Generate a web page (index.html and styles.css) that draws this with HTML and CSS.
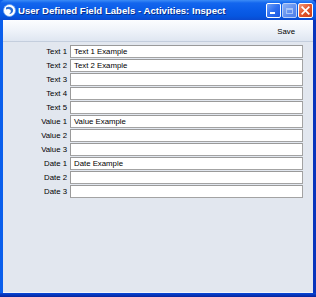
FILE: index.html
```html
<!DOCTYPE html>
<html>
<head>
<meta charset="utf-8">
<link rel="stylesheet" href="styles.css">
</head>
<body>
<div class="window">
  <div class="titlebar">
    <svg class="appicon" width="13" height="13" viewBox="0 0 13 13">
      <circle cx="6.5" cy="6.5" r="6" fill="#ffffff" stroke="#6fa4f0" stroke-width="0.8"/>
      <path d="M3 3.5 C5 2.2 9 2.5 10 5.5 C10.6 8 8.6 10.2 6 10.2 C8 9 8.5 6.8 7 5.6 C5.8 4.7 4.2 4.8 3 5.6 Z" fill="#2a6fd6"/>
    </svg>
    <div class="title">User Defined Field Labels - Activities: Inspect</div>
    <div class="buttons">
      <div class="btn min"><span class="minbar"></span></div>
      <div class="btn max disabled"><span class="maxbox"></span></div>
      <div class="btn close">
        <svg width="9" height="9" viewBox="0 0 9 9"><path d="M1.2 1.2 L7.8 7.8 M7.8 1.2 L1.2 7.8" stroke="#ffffff" stroke-width="1.7" stroke-linecap="square"/></svg>
      </div>
    </div>
  </div>
  <div class="client">
    <div class="toolbar"><span class="tool">Save</span></div>
    <div class="form">
      <div class="label">Text 1</div><div class="field">Text 1 Example</div>
      <div class="label">Text 2</div><div class="field">Text 2 Example</div>
      <div class="label">Text 3</div><div class="field"></div>
      <div class="label">Text 4</div><div class="field"></div>
      <div class="label">Text 5</div><div class="field"></div>
      <div class="label">Value 1</div><div class="field">Value Example</div>
      <div class="label">Value 2</div><div class="field"></div>
      <div class="label">Value 3</div><div class="field"></div>
      <div class="label">Date 1</div><div class="field">Date Example</div>
      <div class="label">Date 2</div><div class="field"></div>
      <div class="label">Date 3</div><div class="field"></div>
    </div>
  </div>
</div>
</body>
</html>
```
FILE: styles.css
```css
html, body {
  margin: 0;
  padding: 0;
}
body {
  width: 316px;
  height: 297px;
  overflow: hidden;
  font-family: "Liberation Sans", Arial, sans-serif;
}
.window {
  width: 316px;
  height: 297px;
  box-sizing: border-box;
  display: flex;
  flex-direction: column;
  background: linear-gradient(to right, #0a5fec 0%, #0a54e0 50%, #0834bc 100%);
  padding: 0 3px 4px 3px;
  position: relative;
}
.window::after {
  content: "";
  position: absolute;
  left: 0;
  right: 0;
  bottom: 0;
  height: 4px;
  background: linear-gradient(to bottom, #0848d8, #06249c);
}
.titlebar {
  height: 20px;
  margin: 0 -3px;
  padding: 0 3px 0 3px;
  display: flex;
  align-items: center;
  background: linear-gradient(to bottom, #3c8cf6 0%, #1366ee 15%, #0a5ce8 50%, #0656e0 80%, #0a4ad0 100%);
  border-radius: 5px 5px 0 0;
}
.appicon {
  flex: none;
  margin-right: 2px;
}
.title {
  flex: 1;
  color: #ffffff;
  font-weight: bold;
  font-size: 9.6px;
  white-space: nowrap;
  text-shadow: 1px 1px 0 #0b2e8a;
}
.buttons {
  display: flex;
  gap: 1px;
  margin-top: 1px;
}
.btn {
  width: 15px;
  height: 15px;
  box-sizing: border-box;
  border: 1px solid #ffffff;
  border-radius: 2px;
  display: flex;
  align-items: center;
  justify-content: center;
  position: relative;
}
.btn.min, .btn.max {
  background: linear-gradient(135deg, #6fa0f8 0%, #2f6ff0 50%, #1a56e0 100%);
}
.btn.disabled {
  background: linear-gradient(135deg, #8db2f4 0%, #5f8ef0 60%, #4d7ee8 100%);
  border-color: #b8cff8;
}
.minbar {
  position: absolute;
  left: 3px;
  bottom: 3px;
  width: 5px;
  height: 2px;
  background: #ffffff;
}
.maxbox {
  width: 7px;
  height: 6px;
  box-sizing: border-box;
  border: 1px solid #a8c4f6;
  border-top-width: 2px;
}
.btn.close {
  background: linear-gradient(135deg, #f39a7c 0%, #e2552b 50%, #c8401c 100%);
}
.client {
  flex: 1;
  background: #e2e7ef;
  display: flex;
  flex-direction: column;
  border-bottom: 1px solid #f0f4fa;
}
.toolbar {
  height: 22px;
  border-bottom: 1px solid #c4cedd;
  background: linear-gradient(to bottom, #fcfdff 0%, #f0f4fa 45%, #dfe6f1 100%);
  display: flex;
  align-items: center;
  justify-content: flex-end;
  padding-right: 18px;
  padding-top: 1px;
  box-sizing: border-box;
}
.tool {
  font-size: 7.8px;
  color: #000000;
}
.form {
  display: grid;
  grid-template-columns: 64px 233px;
  column-gap: 3px;
  row-gap: 1px;
  padding-top: 3px;
  grid-auto-rows: 13px;
}
.label {
  font-size: 7.8px;
  color: #000000;
  text-align: right;
  line-height: 13px;
}
.field {
  box-sizing: border-box;
  height: 13px;
  background: #ffffff;
  border: 1px solid #a3a3a3;
  border-top-color: #9a9a9a;
  border-left-color: #9a9a9a;
  font-size: 7.8px;
  line-height: 11px;
  padding-left: 3px;
  color: #000000;
  white-space: nowrap;
}
```
